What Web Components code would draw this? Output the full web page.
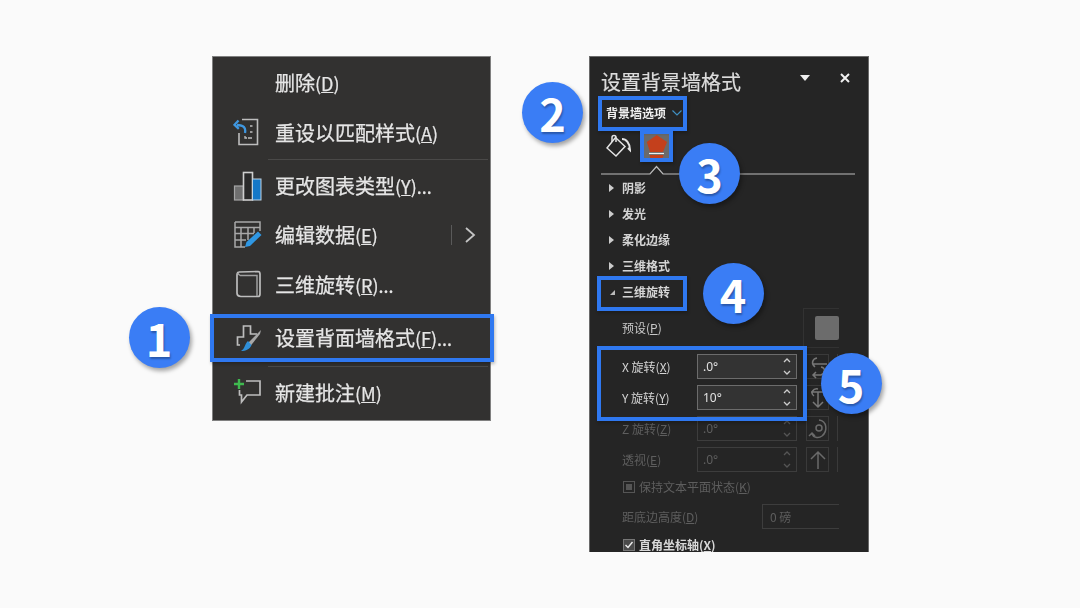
<!DOCTYPE html>
<html lang="zh"><head><meta charset="utf-8"><title>设置背景墙格式</title>
<style>
html,body{margin:0;padding:0;background:#fafafa}
body{font-family:"Noto Sans CJK SC","Noto Sans",sans-serif}
</style></head><body>
<app-stage>
  <ctx-menu>
    <menu-item h="52">删除<menu-key>(<u>D</u>)</menu-key></menu-item>
    <menu-item h="48"><svg slot="icon" width="30" height="30" viewBox="0 0 30 30" fill="none"><path d="M9 1.5H24.5V26.5H6V15" stroke="#bdbdbd" stroke-width="1.6"/><path d="M17 8h2.5M17 14h2.5M12 18v2h2M15 20h4" stroke="#bdbdbd" stroke-width="1.3"/><path d="M12 15c1-5-1-8-8-8M5.500 2.500 1.500 6.800l4.300 4" stroke="#3f97e0" stroke-width="2.300"/></svg>重设以匹配样式<menu-key>(<u>A</u>)</menu-key></menu-item>
    <menu-sep></menu-sep>
    <menu-item h="52"><svg slot="icon" width="30" height="30" viewBox="0 0 30 30" fill="none"><rect x="1.500" y="15" width="9" height="14" fill="#6f6f6f" stroke="#a5a5a5" stroke-width="1.200"/><rect x="10.500" y="1.500" width="9" height="27.500" fill="#2a2a2a" stroke="#cfcfcf" stroke-width="1.600"/><rect x="19.500" y="8" width="8.500" height="21" fill="#1478c8" stroke="#bfd3e2" stroke-width="1"/></svg>更改图表类型<menu-key>(<u>Y</u>)...</menu-key></menu-item>
    <menu-item h="46" more="1"><svg slot="icon" width="30" height="30" viewBox="0 0 30 30" fill="none"><path d="M2 2H27V11M2 7.500H27M2 2V27H12M2 13.500H21M2 20H13M8 7.500V27M15 7.500V20M21 7.500V13" stroke="#a8a8a8" stroke-width="1.500"/><path d="M12 27 13.500 22 25 11.500 28.500 15 17 26Z" fill="#2f97e3"/></svg>编辑数据<menu-key>(<u>E</u>)</menu-key></menu-item>
    <menu-item h="54"><svg slot="icon" width="30" height="30" viewBox="0 0 30 30" fill="none"><path d="M6 2 25 1.500C26.500 1.500 27 2.500 27 4V24C27 26 26 26.500 25 26.500H8C5.500 26.500 4 25 4 23V5C4 3 5 2 6 2Z" stroke="#bdbdbd" stroke-width="1.700"/><path d="M7 5.500H24V26M7 5.500C5.500 4.500 5 3.500 5 3" stroke="#a0a0a0" stroke-width="1.500"/></svg>三维旋转<menu-key>(<u>R</u>)...</menu-key></menu-item>
    <menu-item h="52"><svg slot="icon" width="30" height="30" viewBox="0 0 30 30" fill="none"><path d="M7 22H4.500V14H10.500V3H17.500V11H24" stroke="#bdbdbd" stroke-width="1.700"/><path d="M14 21 26 9 28 7 27 11 17.500 23Z" fill="#a8a8a8"/><path d="M8 28C13 28 17 26 18.500 22L15 18C12 20 12 26 8 28Z" fill="#2f8fd8"/></svg>设置背面墙格式<menu-key>(<u>F</u>)...</menu-key></menu-item>
    <menu-sep></menu-sep>
    <menu-item h="52"><svg slot="icon" width="30" height="30" viewBox="0 0 30 30" fill="none"><path d="M13 3H27V17H14L8.500 24V17H6.500V12" stroke="#bdbdbd" stroke-width="1.700"/><path d="M6 1V11M1 6H11" stroke="#3fb94f" stroke-width="2.400"/></svg>新建批注<menu-key>(<u>M</u>)</menu-key></menu-item>
  </ctx-menu>
  <format-pane>
    <pane-section>阴影</pane-section>
    <pane-section>发光</pane-section>
    <pane-section>柔化边缘</pane-section>
    <pane-section>三维格式</pane-section>
    <pane-section open="1">三维旋转</pane-section>
    <preset-row>预设(<u>P</u>)</preset-row>
    <spin-row value=".0°"><span>X 旋转(<u>X</u>)</span><svg slot="btn" width="22" height="25" viewBox="0 0 22 25" fill="none" stroke="#777" stroke-width="1.500"><path d="M10 3C5 4 4 9 8 12M14 12C19 13 18 18 14 20H7M9 17 6 20l3 3M6 9h14"/></svg></spin-row>
    <spin-row value="10°"><span>Y 旋转(<u>Y</u>)</span><svg slot="btn" width="22" height="25" viewBox="0 0 22 25" fill="none" stroke="#777" stroke-width="1.500"><path d="M4 6H18M11 6V21M6 16l5 5 5-5M7 10C3 7 6 2 11 3"/></svg></spin-row>
    <spin-row value=".0°" disabled="1"><span>Z 旋转(<u>Z</u>)</span><svg slot="btn" width="22" height="25" viewBox="0 0 22 25" fill="none" stroke="#6a6a6a" stroke-width="1.500"><path d="M12 3C20 4 21 14 15 19C11 22 6 20 5 17M2 19l3-3 3 3"/><circle cx="12" cy="11" r="3"/></svg></spin-row>
    <spin-row value=".0°" disabled="1"><span>透视(<u>E</u>)</span><svg slot="btn" width="22" height="25" viewBox="0 0 22 25" fill="none" stroke="#6a6a6a" stroke-width="1.500"><path d="M11 21V4M4 11l7-7 7 7"/></svg></spin-row>
    <check-row disabled="1" mark="square">保持文本平面状态(<u>K</u>)</check-row>
    <height-row>距底边高度(<u>D</u>)</height-row>
    <check-row mark="check">直角坐标轴(<u>X</u>)</check-row>
  </format-pane>
  <hl-box x="210" y="314" w="284" h="48"></hl-box>
  <hl-box x="598" y="96" w="89" h="35"></hl-box>
  <hl-box x="640" y="130" w="33" h="32"></hl-box>
  <hl-box x="597" y="276" w="90" h="35"></hl-box>
  <hl-box x="597" y="346" w="210" h="75"></hl-box>
  <num-badge x="159" y="337">1</num-badge>
  <num-badge x="552.500" y="112">2</num-badge>
  <num-badge x="709.500" y="173">3</num-badge>
  <num-badge x="733" y="293">4</num-badge>
  <num-badge x="851" y="383">5</num-badge>
</app-stage>
<script>
function def(name, css, html){
  customElements.define(name, class extends HTMLElement{
    constructor(){super();this.attachShadow({mode:"open"});}
    connectedCallback(){
      const a=n=>this.getAttribute(n);
      this.shadowRoot.innerHTML="<style>"+css(a)+"</style>"+html(a);
    }
  });
}
const FONT='"Noto Sans CJK SC","Noto Sans",sans-serif';
def("app-stage",()=>`:host{display:flex;position:relative;box-sizing:border-box;width:1080px;height:608px;padding:56px 0 0 212px;gap:98px;align-items:flex-start;overflow:hidden;background:#fafafa;font-family:${FONT}}`,()=>"<slot></slot>");
def("ctx-menu",()=>`:host{display:flex;flex-direction:column;box-sizing:border-box;width:279px;height:365px;background:#323130;border:1px solid #808080;color:#e6e6e6;-webkit-text-stroke:.25px #e6e6e6}
.w{display:flex;flex-direction:column;filter:blur(.45px)}`,()=>`<div class="w"><slot></slot></div>`);
def("menu-key",()=>`:host{display:inline;font-size:18px}`,()=>"<slot></slot>");
def("menu-item",a=>`:host{display:flex;align-items:center;height:${a("h")}px;padding-left:20px;font-size:20px;line-height:1;position:relative;white-space:nowrap}
.i{width:42px;height:30px;flex:none;display:block}
.more{position:absolute;left:238px;top:50%;height:20px;margin-top:-10px;border-left:1px solid #5a5a5a;padding-left:12px;display:flex;align-items:center}`,a=>`<span class="i"><slot name="icon"></slot></span><span><slot></slot></span>${a("more")?'<span class="more"><svg width="12" height="16" viewBox="0 0 12 16" fill="none" stroke="#c4c4c4" stroke-width="1.800"><path d="M2 1l8 7-8 7"/></svg></span>':""}`);
def("menu-sep",()=>`:host{display:block;height:1px;margin:2px 2px 0 55px;background:#4a4948}`,()=>"");
def("format-pane",()=>`:host{display:flex;flex-direction:column;box-sizing:border-box;width:280px;height:496px;background:#252525;border:1px solid #6a6a6a;border-bottom:0;overflow:hidden;color:#d8d8d8}
.w{filter:blur(.4px);display:flex;flex-direction:column}
.hd{display:flex;align-items:center;height:49px;padding-left:11px;font-size:20px;line-height:1;color:#dcdcdc;-webkit-text-stroke:.2px #dcdcdc}
.hd span{flex:1}
.hd svg{display:block;margin-top:-8px}
.down{margin-right:30px}.cl{margin-right:18px}
.opt{display:flex;align-items:center;height:14px;padding-left:16px;font-size:12px;font-weight:700;color:#f0f0f0;line-height:1;gap:6px}
.tabs{display:flex;align-items:center;height:32px;margin-top:10px;padding-left:16px}
.fx{width:29px;height:26px;margin-left:11px;background:#6a6a6a;display:block}
.line{display:block;margin-left:11px;height:13px}
.body{width:249px;overflow:hidden;display:flex;flex-direction:column}`,()=>`<div class="w">
<div class="hd"><span>设置背景墙格式</span><svg class="down" width="10" height="6" viewBox="0 0 10 6"><path d="M0 0H10L5 6Z" fill="#eee"/></svg><svg class="cl" width="10" height="10" viewBox="0 0 10 10" fill="none" stroke="#f0f0f0" stroke-width="2"><path d="M1 1l8 8M9 1l-8 8"/></svg></div>
<div class="opt">背景墙选项<svg width="10" height="6" viewBox="0 0 10 6" fill="none" stroke="#3f8fc0" stroke-width="1.200"><path d="M.5.5 5 5 9.500.5"/></svg></div>
<div class="tabs"><svg width="25" height="24" viewBox="0 0 25 24" fill="none" stroke="#e4e4e4" stroke-width="1.500"><path d="M1 14 9.500 3.500 19 12.500 10 22Z"/><path d="M6 8V3.500C6 .8 10 .8 10 3.500V8"/><path d="M16 5C20 5 24 9 24 16l-2-2" stroke-width="2"/></svg>
<svg class="fx" viewBox="0 0 29 26"><path d="M14.700 2 25 9 21 19H8L4.800 9Z" fill="#c4401c"/><path d="M7 20.500H22" stroke="#eee" stroke-width="1.200"/><path d="M7.500 22H21.500L20.500 25.500H8.500Z" fill="#c4401c"/></svg></div>
<svg class="line" width="254" height="13" viewBox="0 0 254 13" fill="none" stroke="#bdbdbd" stroke-width="1.200"><path d="M0 12H49L55.500 4.500 62 12H254"/></svg>
<div class="body"><slot></slot></div></div>`);
def("pane-section",()=>`:host{display:flex;align-items:center;height:26px;padding-left:18px;font-size:12px;line-height:1;color:#d4d4d4;font-weight:700}
svg{display:block;width:14px;flex:none}`,a=>`<svg width="14" height="10" viewBox="0 0 14 10">${a("open")?'<path d="M2 8H7V3Z" fill="#bbb"/>':'<path d="M1 1 6 5 1 9Z" fill="#ccc"/>'}</svg><slot></slot>`);
def("preset-row",()=>`:host{display:flex;align-items:center;height:45px;margin-bottom:-2px;padding-left:32px;font-size:12px;line-height:1;color:#c8c8c8}
.t{width:181px;flex:none}
.b{box-sizing:border-box;width:40px;height:40px;border:1px solid #323232;padding:7px 0 0 11px;flex:none}
.s{width:24px;height:24px;background:#6c6c6c;border-radius:2px}`,()=>`<span class="t"><slot></slot></span><div class="b"><div class="s"></div></div>`);
def("spin-row",a=>{const d=a("disabled");return `:host{display:flex;align-items:center;height:25px;margin-top:6px;padding-left:32px;font-size:12px;line-height:1;color:${d?"#5e5e5e":"#d4d4d4"}}
.t{width:75px;flex:none}
.in{box-sizing:border-box;width:100px;height:25px;flex:none;border:1px solid ${d?"#3d3d3d":"#6c6c6c"};background:${d?"transparent":"#333"};display:flex;align-items:center;padding:0 5px;color:${d?"#5e5e5e":"#e2e2e2"};font-family:"Noto Sans",sans-serif}
.in span{flex:1}
.in svg{display:block}
.btn{box-sizing:border-box;width:23px;height:25px;margin-left:9px;border:1px solid #3a3a3a;flex:none;display:block}
.edge{width:1px;height:25px;background:#3a3a3a;margin-left:8px;flex:none}`},a=>{const s=a("disabled")?"#555":"#ccc";return `<span class="t"><slot></slot></span><div class="in"><span>${a("value")}</span><svg width="8" height="19" viewBox="0 0 8 19" fill="none" stroke="${s}" stroke-width="1.300"><path d="M1 5 4 2 7 5M1 14l3 3 3-3"/></svg></div><span class="btn"><slot name="btn"></slot></span><span class="edge"></span>`});
def("check-row",a=>`:host{display:flex;align-items:center;gap:4px;height:14px;margin-top:${a("disabled")?"8px":"15px"};padding-left:33px;font-size:12px;line-height:1;color:${a("disabled")?"#5e5e5e":"#d8d8d8"};font-weight:${a("disabled")?400:700}}
svg{display:block;flex:none}`,a=>`<svg width="12" height="12" viewBox="0 0 12 12" fill="none">${a("mark")=="check"?'<rect x=".5" y=".5" width="11" height="11" fill="#4a4a4a" stroke="#777"/><path d="M2.500 6 5 8.500 9.500 3" stroke="#eee" stroke-width="1.400"/>':'<rect x=".5" y=".5" width="11" height="11" stroke="#555"/><rect x="3" y="3" width="6" height="6" fill="#555"/>'}</svg><span><slot></slot></span>`);
def("height-row",()=>`:host{display:flex;align-items:center;height:25px;margin-top:10px;margin-bottom:-6px;padding-left:32px;font-size:12px;line-height:1;color:#5e5e5e}
.t{width:140px;flex:none}
.in{box-sizing:border-box;width:90px;height:25px;border:1px solid #3d3d3d;padding:0 7px;display:flex;align-items:center;flex:none}`,()=>`<span class="t"><slot></slot></span><div class="in">0 磅</div>`);
def("hl-box",a=>`:host{display:block;position:absolute;box-sizing:border-box;left:${a("x")}px;top:${a("y")}px;width:${a("w")}px;height:${a("h")}px;border:4px solid #2f78f0;box-shadow:1px 2px 3px rgba(0,0,0,.25)}`,()=>"");
def("num-badge",a=>`:host{display:flex;position:absolute;align-items:center;justify-content:center;left:${a("x")-30.5}px;top:${a("y")-30.5}px;width:61px;height:61px;border-radius:50%;background:#3a7df5;box-shadow:2px 3px 4px rgba(0,0,0,.35);color:#fff;font-size:45px;font-weight:700;line-height:1;text-shadow:1px 2px 2px rgba(0,0,0,.3)}`,()=>"<slot></slot>");
</script>
</body></html>
